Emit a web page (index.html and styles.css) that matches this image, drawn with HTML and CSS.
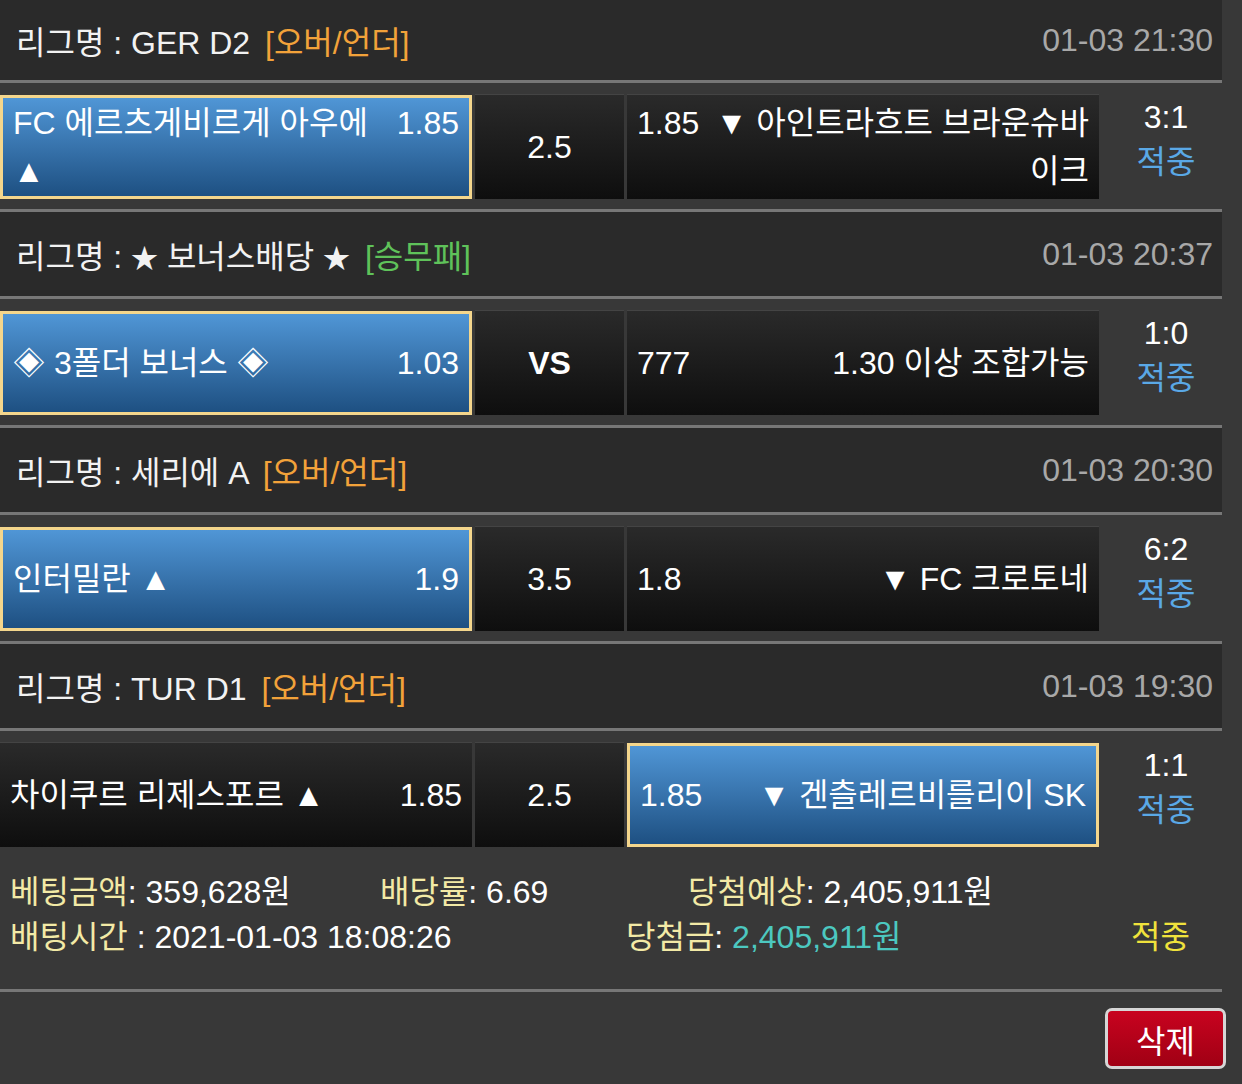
FILE: index.html
```html
<!DOCTYPE html>
<html lang="ko">
<head>
    <meta charset="UTF-8">
    <meta name="viewport" content="width=device-width, initial-scale=1.0">
    <title>배팅내역</title>
    <link rel="stylesheet" href="styles.css">
</head>
<body>
    <div class="bet-list">
        <!-- GER D2 -->
        <div class="league first">
            <div class="league-name">리그명 : GER D2 <span class="tag tag-ou">[오버/언더]</span></div>
            <div class="league-time">01-03 21:30</div>
        </div>
        <div class="match">
            <div class="pick home selected">
                <span class="team">FC 에르츠게비르게 아우에 ▲</span>
                <span class="odds">1.85</span>
            </div>
            <div class="pick line">2.5</div>
            <div class="pick away">
                <span class="odds">1.85</span>
                <span class="team">▼ 아인트라흐트 브라운슈바이크</span>
            </div>
            <div class="result">
                <div class="score">3:1</div>
                <div class="hit">적중</div>
            </div>
        </div>

        <!-- 보너스 -->
        <div class="league">
            <div class="league-name">리그명 : <span class="star">★</span> 보너스배당 <span class="star">★</span> <span class="tag tag-wdl">[승무패]</span></div>
            <div class="league-time">01-03 20:37</div>
        </div>
        <div class="match">
            <div class="pick home selected">
                <span class="team">◈ 3폴더 보너스 ◈</span>
                <span class="odds">1.03</span>
            </div>
            <div class="pick line vs">VS</div>
            <div class="pick away">
                <span class="odds">777</span>
                <span class="team">1.30 이상 조합가능</span>
            </div>
            <div class="result">
                <div class="score">1:0</div>
                <div class="hit">적중</div>
            </div>
        </div>

        <!-- 세리에 A -->
        <div class="league">
            <div class="league-name">리그명 : 세리에 A <span class="tag tag-ou">[오버/언더]</span></div>
            <div class="league-time">01-03 20:30</div>
        </div>
        <div class="match">
            <div class="pick home selected">
                <span class="team">인터밀란 ▲</span>
                <span class="odds">1.9</span>
            </div>
            <div class="pick line">3.5</div>
            <div class="pick away">
                <span class="odds">1.8</span>
                <span class="team">▼ FC 크로토네</span>
            </div>
            <div class="result">
                <div class="score">6:2</div>
                <div class="hit">적중</div>
            </div>
        </div>

        <!-- TUR D1 -->
        <div class="league">
            <div class="league-name">리그명 : TUR D1 <span class="tag tag-ou">[오버/언더]</span></div>
            <div class="league-time">01-03 19:30</div>
        </div>
        <div class="match">
            <div class="pick home">
                <span class="team">차이쿠르 리제스포르 ▲</span>
                <span class="odds">1.85</span>
            </div>
            <div class="pick line">2.5</div>
            <div class="pick away selected">
                <span class="odds">1.85</span>
                <span class="team">▼ 겐츨레르비를리이 SK</span>
            </div>
            <div class="result">
                <div class="score">1:1</div>
                <div class="hit">적중</div>
            </div>
        </div>

        <div class="summary">
            <div class="summary-row row-a">
                <div><span class="label">베팅금액</span>: 359,628원</div>
                <div><span class="label">배당률</span>: 6.69</div>
                <div><span class="label">당첨예상</span>: 2,405,911원</div>
            </div>
            <div class="summary-row row-b">
                <div><span class="label">배팅시간</span> : 2021-01-03 18:08:26</div>
                <div><span class="label">당첨금</span>: <span class="win">2,405,911원</span></div>
                <div class="status">적중</div>
            </div>
        </div>
    </div>

    <div class="actions">
        <button class="btn-delete">삭제</button>
    </div>
</body>
</html>
```

FILE: styles.css
```css
/* 기본 */
* {
    margin: 0;
    padding: 0;
    box-sizing: border-box;
}

body {
    font-family: 'Liberation Sans', 'Noto Sans CJK KR', sans-serif;
    font-size: 32px;
    color: #fff;
    background: #383838;
}

.bet-list {
    width: 1222px;
}

/* 리그 헤더 */
.league {
    height: 90px;
    display: flex;
    justify-content: space-between;
    align-items: center;
    padding: 0 9px 0 16px;
    background: #2a2a2a;
    border-top: 3px solid #777;
    border-bottom: 3px solid #777;
    color: #f2f2f2;
}

.league.first {
    height: 83px;
    border-top: none;
}

.league-time {
    color: #a8a8a8;
}

.star {
    font-size: 27px;
}

.tag {
    margin-left: 6px;
}

.tag-ou {
    color: #f2a23a;
}

.tag-wdl {
    color: #5fc25a;
}

/* 경기 */
.match {
    display: grid;
    grid-template-columns: 472px 149px 472px 123px;
    column-gap: 3px;
    padding: 12px 0 10px;
}

.pick {
    height: 104px;
    display: grid;
    grid-template-columns: 1fr auto;
    align-content: center;
    align-items: baseline;
    column-gap: 14px;
    padding: 0 10px;
    line-height: 48px;
    background: linear-gradient(#2a2a2a, #0e0e0e);
    box-shadow: 0 -1px 0 #444;
}

.pick.away {
    grid-template-columns: auto 1fr;
}

.pick.away .team {
    text-align: right;
}

.pick.line {
    grid-template-columns: auto;
    justify-content: center;
}

.pick.vs {
    font-weight: bold;
}

.pick.selected {
    border: 3px solid #f4d68c;
    background: linear-gradient(#5096d6, #1e5082);
    box-shadow: none;
}

.result {
    text-align: center;
    line-height: 45px;
    padding-left: 5px;
}

.hit {
    color: #5aa8e6;
}

/* 합계 */
.summary {
    padding: 13px 0 29px;
    line-height: 45px;
    border-bottom: 3px solid #777;
}

.summary-row {
    display: grid;
}

.row-a {
    grid-template-columns: 370px 308px 1fr;
}

.row-b {
    grid-template-columns: 616px 505px 1fr;
}

.summary-row > div {
    padding-left: 10px;
}

.label {
    color: #f3eaa6;
}

.win {
    color: #4cc8c0;
}

.status {
    color: #f0e23c;
}

/* 버튼 */
.actions {
    display: flex;
    justify-content: flex-end;
    padding: 16px 16px 0 0;
}

.btn-delete {
    width: 121px;
    height: 61px;
    font-family: inherit;
    font-size: 32px;
    color: #fff;
    border: 3px solid #d6d6d6;
    border-radius: 7px;
    background: linear-gradient(#c8031f, #a00014);
    cursor: pointer;
}
```
